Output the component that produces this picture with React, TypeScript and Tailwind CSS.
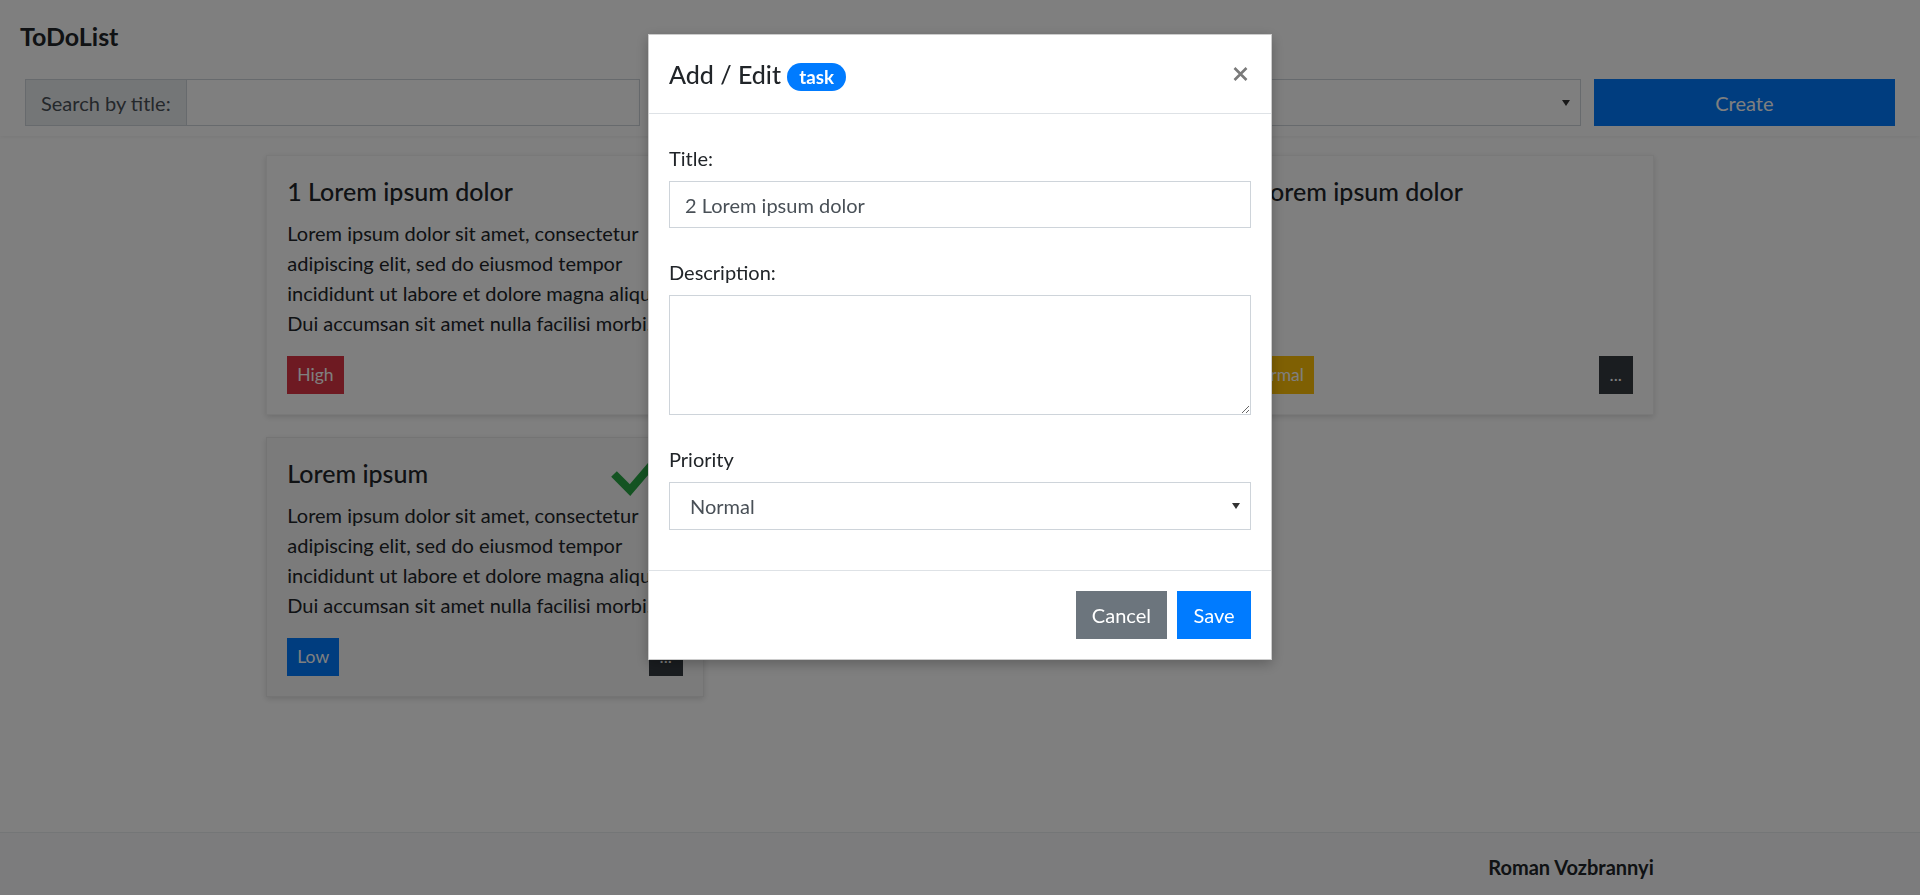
import React from "react";

type Task = {
  title: string;
  lines: string[];
  priority: "High" | "Normal" | "Low";
  done?: boolean;
};

const tasks: Task[] = [
  {
    title: "1 Lorem ipsum dolor",
    lines: [
      "Lorem ipsum dolor sit amet, consectetur",
      "adipiscing elit, sed do eiusmod tempor",
      "incididunt ut labore et dolore magna aliqua.",
      "Dui accumsan sit amet nulla facilisi morbi.",
    ],
    priority: "High",
  },
  { title: "2 Lorem ipsum dolor", lines: [], priority: "Normal" },
  { title: "3 Lorem ipsum dolor", lines: [], priority: "Normal" },
  {
    title: "Lorem ipsum",
    lines: [
      "Lorem ipsum dolor sit amet, consectetur",
      "adipiscing elit, sed do eiusmod tempor",
      "incididunt ut labore et dolore magna aliqua.",
      "Dui accumsan sit amet nulla facilisi morbi.",
    ],
    priority: "Low",
    done: true,
  },
];

const priorityClass = {
  High: "bg-[#dc3545]",
  Normal: "bg-[#ffc107]",
  Low: "bg-[#007bff]",
};

function Caret() {
  return (
    <svg width="8" height="6" viewBox="0 0 8 6" className="shrink-0">
      <path d="M0 0h8L4 6z" fill="#333" />
    </svg>
  );
}

function TaskCard({ task }: { task: Task }) {
  return (
    <div
      className={
        "relative flex flex-col p-[20px] border border-black/5 shadow-[0_2px_6px_rgba(0,0,0,0.14)] " +
        (task.done ? "bg-[#f6f6f6]" : "bg-white")
      }
    >
      <h5 className="text-[25px] leading-[30px] font-medium mb-[12px]">{task.title}</h5>
      {task.lines.length > 0 && (
        <p className="mb-[18px] overflow-hidden whitespace-nowrap">
          {task.lines.map((l) => (
            <span key={l} className="block">
              {l}
            </span>
          ))}
        </p>
      )}
      {task.done && (
        <svg
          width="60"
          height="56"
          viewBox="0 0 60 56"
          className="absolute right-[35px] top-[6px]"
        >
          <polyline
            points="6,30 22,46 58,4"
            fill="none"
            stroke="#28a745"
            strokeWidth="8"
            strokeLinecap="butt"
            strokeLinejoin="miter"
          />
        </svg>
      )}
      <div className="mt-auto flex items-center justify-between">
        <button
          className={
            "h-[38px] px-[10px] text-[17.5px] leading-[26px] text-white " +
            priorityClass[task.priority]
          }
        >
          {task.priority}
        </button>
        <button className="h-[38px] w-[34px] bg-[#343a40] text-white text-[17.5px] leading-[26px]">
          ...
        </button>
      </div>
    </div>
  );
}

export default function App() {
  return (
    <div className="relative min-h-screen flex flex-col bg-white text-[#212529] text-[20px] leading-[30px] font-['Lato','Noto_Sans',sans-serif]">
      <header className="bg-white shadow-[0_1px_4px_rgba(0,0,0,0.06)] pt-[21px] pb-[10px]">
        <div className="px-[20px]">
          <h1 className="text-[25px] leading-[30px] font-bold">ToDoList</h1>
        </div>
        <div className="mt-[28px] px-[25px] grid grid-cols-12 gap-x-[12.5px]">
          <div className="col-span-4 flex h-[47px]">
            <span className="flex items-center px-[15px] bg-[#e9ecef] border border-[#ced4da] text-[#495057] whitespace-nowrap">
              Search by title:
            </span>
            <input className="flex-1 min-w-0 border border-l-0 border-[#ced4da] px-[15px] text-[#495057] outline-none" />
          </div>
          <div className="col-span-3 flex items-center justify-between h-[47px] border border-[#ced4da] pl-[19px] pr-[10px] text-[#495057]">
            <span>All priorities</span>
            <Caret />
          </div>
          <div className="col-span-3 flex items-center justify-between h-[47px] border border-[#ced4da] pl-[19px] pr-[10px] text-[#495057]">
            <span>Sort by</span>
            <Caret />
          </div>
          <button className="col-span-2 h-[47px] bg-[#007bff] text-white">Create</button>
        </div>
      </header>

      <main className="w-[1425px] mx-auto px-[18.75px] pt-[19px] pb-[20px]">
        <div className="grid grid-cols-3 gap-x-[37.5px] gap-y-[22px]">
          {tasks.map((t) => (
            <TaskCard key={t.title} task={t} />
          ))}
        </div>
      </main>

      <footer className="mt-auto bg-[#f8f9fa] border-t border-[#e9ecef] pt-[19px] pb-[13px]">
        <div className="w-[1425px] mx-auto px-[18.75px] text-right font-bold">Roman Vozbrannyi</div>
      </footer>

      <div className="fixed inset-0 bg-black/50" />

      <div className="fixed inset-0 flex justify-center items-start pt-[34px]">
        <div className="w-[624px] bg-white border border-black/20 shadow-[0_4px_12px_rgba(0,0,0,0.25)]">
          <div className="h-[79px] flex items-center justify-between px-[20px] border-b border-[#dee2e6]">
            <h5 className="text-[25px] leading-[37px] font-medium">
              Add / Edit{" "}
              <span className="inline-block px-[12px] py-[4.5px] rounded-full bg-[#007bff] text-white font-bold text-[18.75px] leading-none">
                task
              </span>
            </h5>
            <button className="mr-[3px]">
              <svg width="15" height="14" viewBox="0 0 15 14">
                <path d="M1.5 1L13.5 13M13.5 1L1.5 13" stroke="#7a7a7a" strokeWidth="2.6" />
              </svg>
            </button>
          </div>

          <div className="px-[20px] pt-[29px] pb-[40px]">
            <label className="block mb-[8px]">Title:</label>
            <input
              defaultValue="2 Lorem ipsum dolor"
              className="block w-full h-[47px] border border-[#ced4da] px-[15px] text-[#495057] outline-none mb-[29px]"
            />
            <label className="block mb-[8px]">Description:</label>
            <textarea className="block w-full h-[120px] border border-[#ced4da] px-[15px] py-[7px] text-[#495057] outline-none mb-[29px]" />
            <label className="block mb-[8px]">Priority</label>
            <div className="flex items-center justify-between h-[48px] border border-[#ced4da] pl-[20px] pr-[10px] text-[#495057]">
              <span>Normal</span>
              <Caret />
            </div>
          </div>

          <div className="flex justify-end gap-[10px] px-[20px] pt-[20px] pb-[20px] border-t border-[#dee2e6]">
            <button className="h-[48px] px-[16px] bg-[#6c757d] text-white">Cancel</button>
            <button className="h-[48px] px-[16.5px] bg-[#007bff] text-white">Save</button>
          </div>
        </div>
      </div>
    </div>
  );
}
